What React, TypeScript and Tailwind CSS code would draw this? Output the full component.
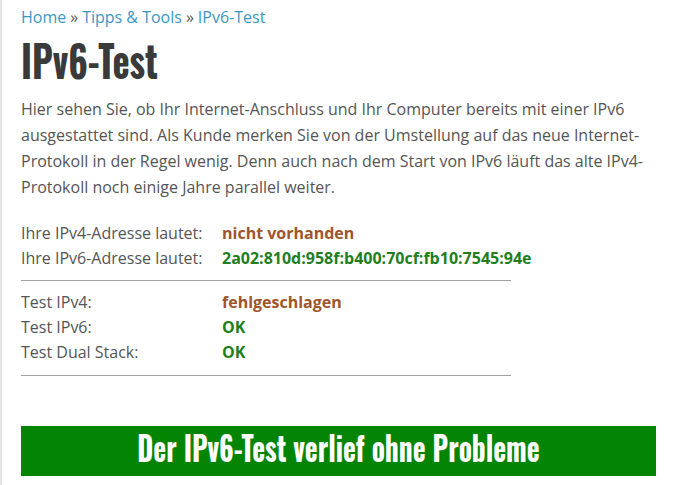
import React from "react";

const body = { fontFamily: '"Open Sans", "Noto Sans", sans-serif' };
const cond = { fontFamily: '"Oswald", "DejaVu Sans Condensed", "Liberation Sans", sans-serif' };

export default function App() {
  return (
    <div className="min-h-screen border-l-2 border-[#e4e4e4] bg-white pl-[19px] pr-[17px]" style={body}>
      <div className="flex gap-[4px] pt-[5px] text-[16px] leading-[24px] text-[#555]">
        <span className="text-[#3b97c2]">Home</span>
        <span>»</span>
        <span className="text-[#3b97c2]">Tipps &amp; Tools</span>
        <span>»</span>
        <span className="text-[#3b97c2]">IPv6-Test</span>
      </div>
      <h1 className="mt-[5px] h-[52px] text-[#3a3a3a]">
        <span
          className="inline-block origin-left scale-x-[0.83] text-[44px] font-bold leading-[52px]"
          style={cond}
        >
          IPv6-Test
        </span>
      </h1>
      <p className="mt-[10px] text-[16px] leading-[26px] text-[#555]">
        Hier sehen Sie, ob Ihr Internet-Anschluss und Ihr Computer bereits mit einer IPv6 ausgestattet sind. Als Kunde
        merken Sie von der Umstellung auf das neue Internet-Protokoll in der Regel wenig. Denn auch nach dem Start von
        IPv6 läuft das alte IPv4-Protokoll noch einige Jahre parallel weiter.
      </p>
      <div className="mt-[21px] w-[490px] text-[16px] leading-[25px] text-[#555]">
        <div className="grid grid-cols-[201px_1fr]">
          <div>Ihre IPv4-Adresse lautet:</div>
          <div className="font-bold text-[#a0552a]">nicht vorhanden</div>
          <div>Ihre IPv6-Adresse lautet:</div>
          <div className="whitespace-nowrap font-bold text-[#1f7f1f]">2a02:810d:958f:b400:70cf:fb10:7545:94e</div>
        </div>
        <div className="my-[9px] border-t border-[#a0a0a0]" />
        <div className="grid grid-cols-[201px_1fr]">
          <div>Test IPv4:</div>
          <div className="font-bold text-[#a0552a]">fehlgeschlagen</div>
          <div>Test IPv6:</div>
          <div className="font-bold text-[#1f7f1f]">OK</div>
          <div>Test Dual Stack:</div>
          <div className="font-bold text-[#1f7f1f]">OK</div>
        </div>
        <div className="mt-[10px] border-t border-[#a0a0a0]" />
      </div>
      <div className="mt-[50px] flex h-[50px] items-start justify-center bg-[#038403]">
        <span
          className="inline-block scale-x-[0.83] whitespace-nowrap text-[33px] font-bold leading-[44px] text-white"
          style={cond}
        >
          Der IPv6-Test verlief ohne Probleme
        </span>
      </div>
    </div>
  );
}
